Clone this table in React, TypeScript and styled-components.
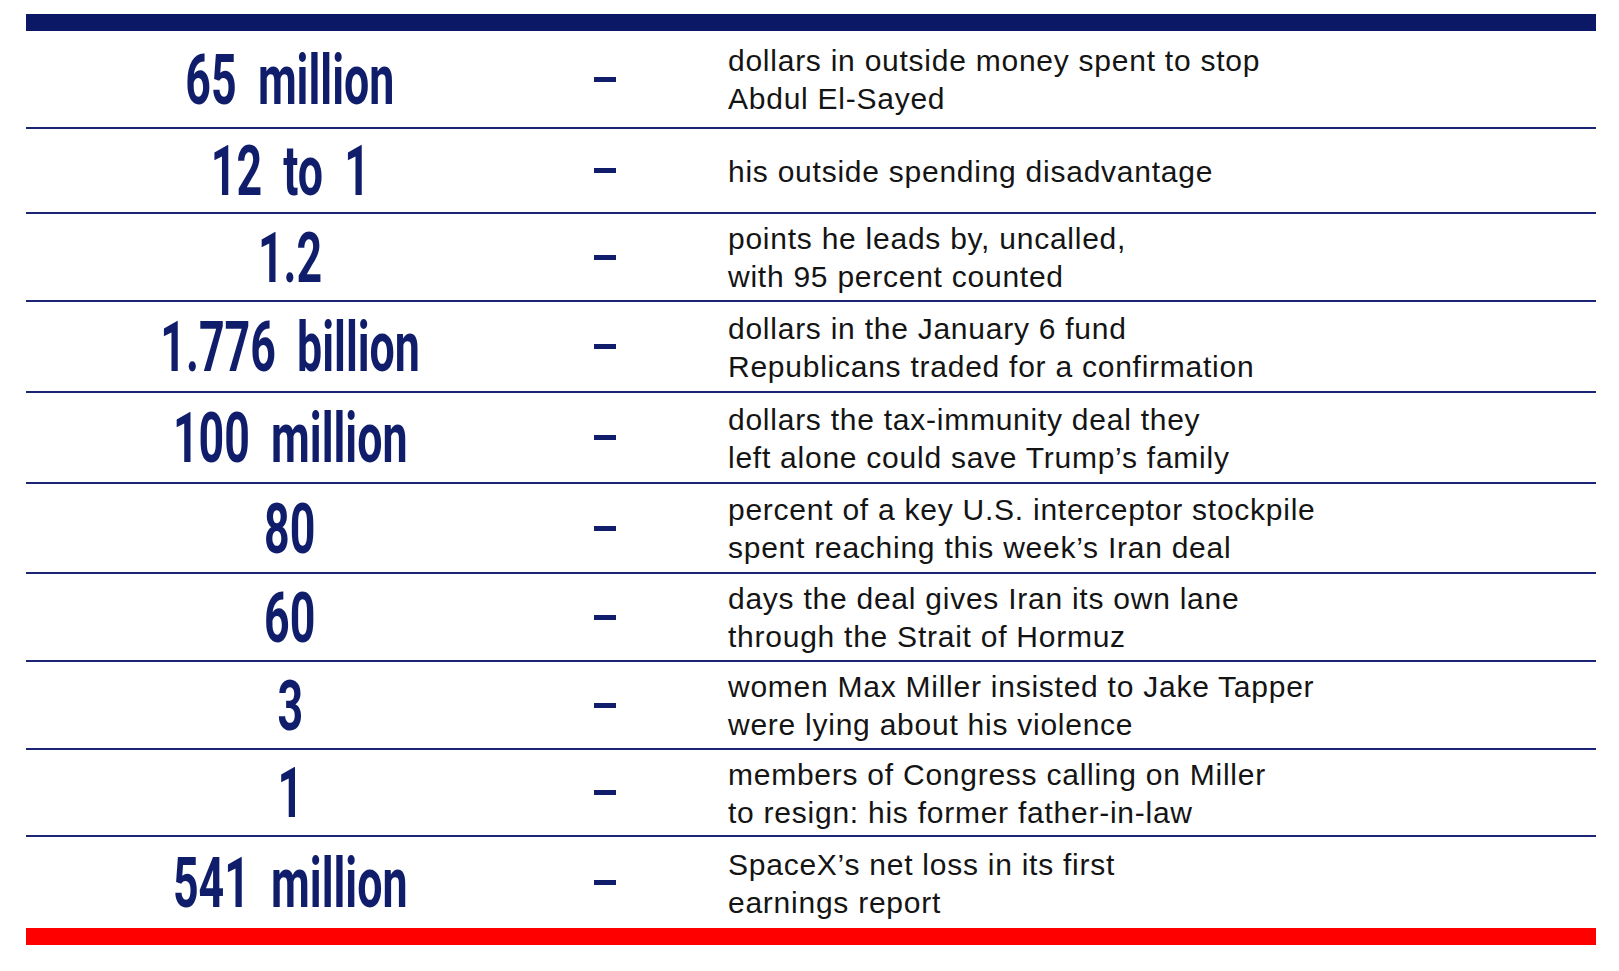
import styled, { createGlobalStyle } from "styled-components";

const GlobalStyle = createGlobalStyle`
  html, body {
    margin: 0;
    padding: 0;
    background: #ffffff;
  }
`;

const NAVY = "#101d6b";

type Stat = {
  figure: string;
  lines: string[];
  height: number;
};

const STATS: Stat[] = [
  {
    figure: "65 million",
    lines: ["dollars in outside money spent to stop", "Abdul El-Sayed"],
    height: 96,
  },
  {
    figure: "12 to 1",
    lines: ["his outside spending disadvantage"],
    height: 83,
  },
  {
    figure: "1.2",
    lines: ["points he leads by, uncalled,", "with 95 percent counted"],
    height: 86,
  },
  {
    figure: "1.776 billion",
    lines: [
      "dollars in the January 6 fund",
      "Republicans traded for a confirmation",
    ],
    height: 89,
  },
  {
    figure: "100 million",
    lines: [
      "dollars the tax-immunity deal they",
      "left alone could save Trump’s family",
    ],
    height: 89,
  },
  {
    figure: "80",
    lines: [
      "percent of a key U.S. interceptor stockpile",
      "spent reaching this week’s Iran deal",
    ],
    height: 88,
  },
  {
    figure: "60",
    lines: [
      "days the deal gives Iran its own lane",
      "through the Strait of Hormuz",
    ],
    height: 86,
  },
  {
    figure: "3",
    lines: [
      "women Max Miller insisted to Jake Tapper",
      "were lying about his violence",
    ],
    height: 86,
  },
  {
    figure: "1",
    lines: [
      "members of Congress calling on Miller",
      "to resign: his former father-in-law",
    ],
    height: 85,
  },
  {
    figure: "541 million",
    lines: ["SpaceX’s net loss in its first", "earnings report"],
    height: 91,
  },
];

const Page = styled.div`
  padding: 14px 0 0 26px;
  width: 1570px;
`;

const Bar = styled.div<{ $color: string }>`
  height: 17px;
  background: ${(p) => p.$color};
`;

const Table = styled.div`
  display: flex;
  flex-direction: column;
`;

const Row = styled.div<{ $height: number }>`
  display: grid;
  grid-template-columns: 528px 102px 1fr;
  align-items: center;
  height: ${(p) => p.$height}px;

  & + & {
    border-top: 2px solid #1b2573;
  }
`;

const FigureCell = styled.div`
  display: flex;
  justify-content: center;
  align-items: center;
`;

const Figure = styled.span`
  display: inline-block;
  font-family: Roboto, "Liberation Sans", sans-serif;
  font-weight: 700;
  font-size: 71px;
  line-height: 1;
  color: ${NAVY};
  word-spacing: 16px;
  white-space: nowrap;
  transform: scaleX(0.63);
  transform-origin: center;
`;

const DashCell = styled.div`
  display: flex;
  justify-content: center;
  align-items: center;
`;

const Dash = styled.span`
  display: block;
  width: 22px;
  height: 5px;
  background: ${NAVY};
`;

const Description = styled.div`
  padding-left: 72px;
  padding-top: 2px;
  font-family: "Liberation Sans", Arial, sans-serif;
  font-size: 30px;
  letter-spacing: 0.75px;
  line-height: 38px;
  color: #141414;
`;

const Line = styled.div`
  white-space: nowrap;
`;

export default function App() {
  return (
    <>
      <GlobalStyle />
      <Page>
        <Bar $color="#0b1866" />
        <Table>
          {STATS.map((stat) => (
            <Row key={stat.figure} $height={stat.height}>
              <FigureCell>
                <Figure>{stat.figure}</Figure>
              </FigureCell>
              <DashCell>
                <Dash />
              </DashCell>
              <Description>
                {stat.lines.map((line) => (
                  <Line key={line}>{line}</Line>
                ))}
              </Description>
            </Row>
          ))}
        </Table>
        <Bar $color="#ff0000" />
      </Page>
    </>
  );
}
